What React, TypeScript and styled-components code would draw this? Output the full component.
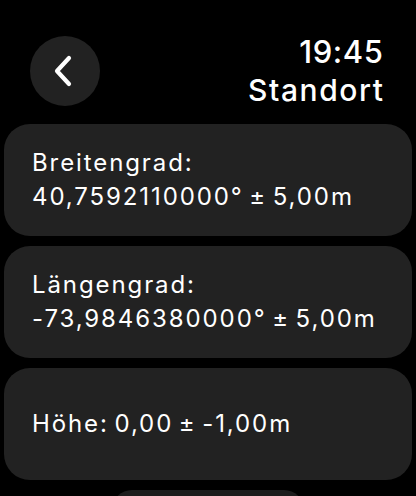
import React from "react";
import styled, { createGlobalStyle } from "styled-components";

const Global = createGlobalStyle`
  html, body { margin: 0; padding: 0; background: #000; }
  body { width: 416px; height: 496px; overflow: hidden; font-family: Inter, "Noto Sans", sans-serif; color: #fff; -webkit-font-smoothing: antialiased; }
`;

const Screen = styled.div`
  width: 416px;
  height: 496px;
  overflow: hidden;
  background: #000;
  display: flex;
  flex-direction: column;
`;

const Header = styled.header`
  flex-shrink: 0;
  display: flex;
  justify-content: space-between;
  align-items: flex-start;
  padding: 36px 33px 0 30px;
  height: 88px;
`;

const BackButton = styled.button`
  width: 70px;
  height: 70px;
  border-radius: 50%;
  border: none;
  background: #222222;
  display: flex;
  align-items: center;
  justify-content: center;
  padding: 0;
  padding-right: 4px;
`;

const TitleBlock = styled.div`
  display: flex;
  flex-direction: column;
  align-items: flex-end;
`;

const Time = styled.div`
  font-size: 31px;
  font-weight: 500;
  line-height: 39px;
  letter-spacing: 0.6px;
  margin-top: -4px;
  margin-right: -0.6px;
`;

const Title = styled.div`
  font-size: 30px;
  font-weight: 500;
  line-height: 39px;
  letter-spacing: 1.6px;
  margin-right: -1.6px;
`;

const List = styled.div`
  display: flex;
  flex-direction: column;
  align-items: center;
  gap: 10px;
  padding: 0 4px;
`;

const Card = styled.div`
  box-sizing: border-box;
  width: 100%;
  height: 112px;
  border-radius: 26px;
  background: #222222;
  display: flex;
  flex-direction: column;
  justify-content: center;
  padding: 0 28px;
  font-size: 24px;
  line-height: 34px;
  letter-spacing: 1.9px;
  word-spacing: -3px;
  flex-shrink: 0;
`;

const PeekCard = styled.div`
  width: 192px;
  height: 60px;
  border-radius: 20px;
  background: #1c1c1c;
  flex-shrink: 0;
`;

const Line = styled.div`
  white-space: nowrap;
`;

const Chevron = () => (
  <svg width="22" height="32" viewBox="0 0 22 32" fill="none">
    <path d="M17 3 L5 16 L17 29" stroke="#fff" strokeWidth="4.2" strokeLinecap="round" strokeLinejoin="round" />
  </svg>
);

export default function App() {
  return (
    <>
      <Global />
      <Screen>
        <Header>
          <BackButton aria-label="Zurück">
            <Chevron />
          </BackButton>
          <TitleBlock>
            <Time>19:45</Time>
            <Title>Standort</Title>
          </TitleBlock>
        </Header>
        <List>
          <Card>
            <Line>Breitengrad:</Line>
            <Line>40,7592110000° ± 5,00m</Line>
          </Card>
          <Card>
            <Line>Längengrad:</Line>
            <Line>-73,9846380000° ± 5,00m</Line>
          </Card>
          <Card>
            <Line>Höhe: 0,00 ± -1,00m</Line>
          </Card>
          <PeekCard />
        </List>
      </Screen>
    </>
  );
}
